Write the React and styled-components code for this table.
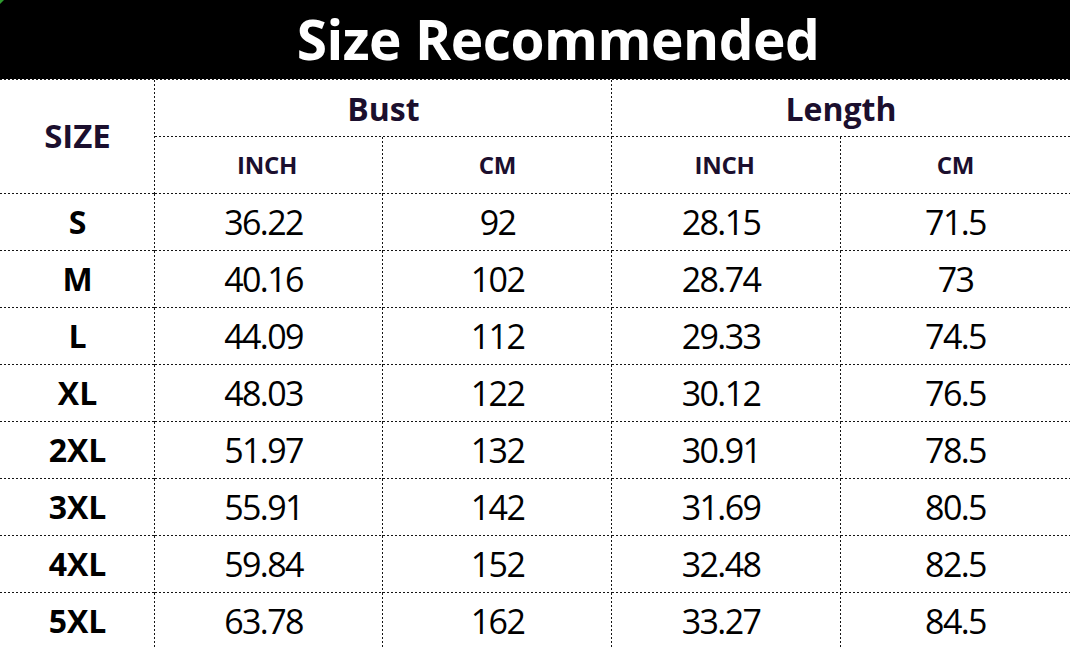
import React from "react";
import styled, { createGlobalStyle, css } from "styled-components";

const GlobalStyle = createGlobalStyle`
  html, body {
    margin: 0;
    padding: 0;
    background: #ffffff;
  }
  body {
    font-family: "Open Sans", "Noto Sans", sans-serif;
  }
`;

const DOT = "#151515";

const lineBottom = css`
  repeating-linear-gradient(to right, ${DOT} 0 2px, transparent 2px 4px) left bottom / 100% 1px no-repeat
`;

const lineRight = css`
  repeating-linear-gradient(to bottom, ${DOT} 0 2px, transparent 2px 4px) right top / 1px 100% no-repeat
`;

const Sheet = styled.div`
  position: relative;
  width: 1070px;
  height: 649px;
  overflow: hidden;
  display: grid;
  grid-template-columns: 155px 228px 229px 229px 229px;
  grid-template-rows: 80px;
  grid-auto-rows: 57px;
`;

const Corner = styled.div`
  position: absolute;
  top: 0;
  left: 0;
  width: 0;
  height: 0;
  border-top: 4px solid #2f9b2f;
  border-right: 4px solid transparent;
`;

const Banner = styled.div`
  grid-column: 1 / -1;
  display: flex;
  align-items: center;
  justify-content: center;
  padding: 0 0 4px 46px;
  background:
    linear-gradient(#000, #000) left top / 100% 79px no-repeat,
    ${lineBottom};
  color: #ffffff;
  font-size: 55px;
  font-weight: 700;
  letter-spacing: -0.5px;
`;

const Cell = styled.div`
  display: flex;
  align-items: center;
  justify-content: center;
  grid-column: ${(p) => p.$col || "auto"};
  grid-row: ${(p) => p.$row || "auto"};
  padding-right: ${(p) => (p.$shift ? `${p.$shift}px` : "0")};
  background: ${(p) =>
    [p.$right !== false && lineRight, p.$bottom !== false && lineBottom]
      .filter(Boolean)
      .map((l) => l.join(""))
      .join(", ") || "none"};
`;

const GroupHead = styled(Cell)`
  color: #1b0f2e;
  font-size: 32px;
  font-weight: 700;
  padding-bottom: 1px;
`;

const SizeHead = styled(GroupHead)`
  font-size: 33px;
  padding-bottom: 4px;
`;

const UnitHead = styled(Cell)`
  color: #1b0f2e;
  font-size: 24px;
  font-weight: 700;
  letter-spacing: -0.3px;
  padding-bottom: 3px;
`;

const SizeLabel = styled(Cell)`
  color: #000;
  font-size: 32px;
  font-weight: 700;
  padding-bottom: 2px;
`;

const Value = styled(Cell)`
  color: #000;
  font-size: 34px;
  font-weight: 400;
  letter-spacing: -1.6px;
  padding-bottom: 2px;
`;

const rows = [
  ["S", "36.22", "92", "28.15", "71.5"],
  ["M", "40.16", "102", "28.74", "73"],
  ["L", "44.09", "112", "29.33", "74.5"],
  ["XL", "48.03", "122", "30.12", "76.5"],
  ["2XL", "51.97", "132", "30.91", "78.5"],
  ["3XL", "55.91", "142", "31.69", "80.5"],
  ["4XL", "59.84", "152", "32.48", "82.5"],
  ["5XL", "63.78", "162", "33.27", "84.5"],
];

export default function App() {
  return (
    <>
      <GlobalStyle />
      <Sheet>
        <Corner />
        <Banner>Size Recommended</Banner>

        <SizeHead $row="span 2">SIZE</SizeHead>
        <GroupHead $col="span 2">Bust</GroupHead>
        <GroupHead $col="span 2" $right={false}>
          Length
        </GroupHead>
        <UnitHead $shift={4}>INCH</UnitHead>
        <UnitHead>CM</UnitHead>
        <UnitHead $shift={4}>INCH</UnitHead>
        <UnitHead $right={false}>CM</UnitHead>

        {rows.map(([size, ...vals], i) => (
          <React.Fragment key={size}>
            <SizeLabel $bottom={i < rows.length - 1}>{size}</SizeLabel>
            {vals.map((v, j) => (
              <Value
                key={j}
                $shift={j % 2 === 0 ? 11 : 0}
                $right={j < vals.length - 1}
                $bottom={i < rows.length - 1}
              >
                {v}
              </Value>
            ))}
          </React.Fragment>
        ))}
      </Sheet>
    </>
  );
}
